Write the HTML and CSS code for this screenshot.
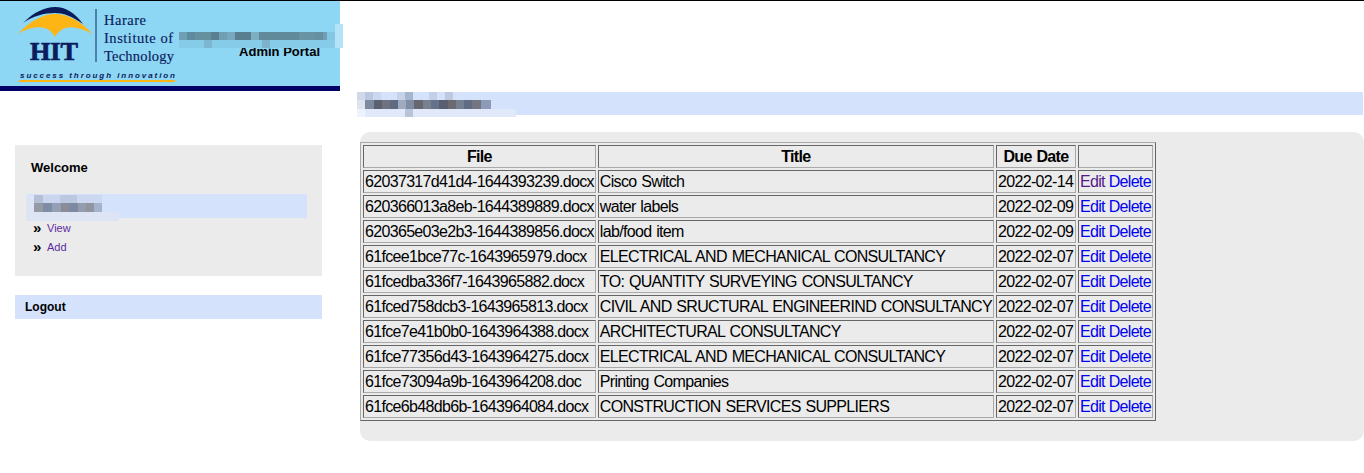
FILE: index.html
```html
<!DOCTYPE html>
<html lang="en">
<head>
<meta charset="utf-8">
<title>Admin Portal</title>
<link rel="stylesheet" href="styles.css">
</head>
<body>
<div class="page">
  <div class="left">
    <header class="banner">
      <svg class="logo" viewBox="0 0 180 85" width="180" height="85" aria-label="Harare Institute of Technology">
        <path d="M23 22 C34 11 45 6 55 6 C66 6 75 12 83 23 C72 15 63 12 55 12 C44 12 33 15 23 22 Z" fill="#0b1c5c"/>
        <path d="M17.5 33 C30 20 43 13 55 13 C68 13 81 20 92.5 33 C82 27 71 25 65 27 C60 29 57 32 55 36 C53 32 50 29 45 27 C38 25 27 27 17.5 33 Z" fill="#fdb515"/>
        <text class="logo-hit" x="30" y="58.5" textLength="48" lengthAdjust="spacingAndGlyphs">HIT</text>
        <rect x="95.5" y="8" width="1" height="53" fill="#0b2a6b"/>
        <text class="logo-name" x="104" y="23.5" textLength="42">Harare</text>
        <text class="logo-name" x="104" y="42" textLength="69">Institute of</text>
        <text class="logo-name" x="104" y="59.5" textLength="70">Technology</text>
        <text class="logo-tag" x="20" y="77" textLength="155">success through innovation</text>
        <rect x="19" y="79" width="156" height="2" fill="#fdb515"/>
      </svg>
      <div class="portal">Admin Portal</div>
      <svg class="mosaic mosaic-banner" width="165" height="24" viewBox="0 0 165 24" aria-hidden="true" shape-rendering="crispEdges">
        <rect x="0" y="8" width="149" height="8" fill="#6f9fb2"/>
        <rect x="8" y="8" width="8" height="8" fill="#5d8a9c"/>
        <rect x="16" y="8" width="24" height="8" fill="#65919f"/>
        <rect x="32" y="8" width="8" height="8" fill="#578090"/>
        <rect x="48" y="8" width="8" height="8" fill="#78a8bd"/>
        <rect x="56" y="8" width="16" height="8" fill="#577f90"/>
        <rect x="72" y="8" width="8" height="8" fill="#7dafc2"/>
        <rect x="80" y="8" width="40" height="8" fill="#60899a"/>
        <rect x="120" y="8" width="16" height="8" fill="#6793a4"/>
        <rect x="136" y="8" width="8" height="8" fill="#64909f"/>
        <rect x="148" y="8" width="9" height="8" fill="#83c6e6"/>
        <rect x="0" y="16" width="157" height="8" fill="#86cce8"/>
        <rect x="25" y="16" width="8" height="8" fill="#7cb6d0"/>
        <rect x="83" y="16" width="8" height="8" fill="#7cb3ca"/>
        <rect x="156" y="0" width="8" height="24" fill="#b5e3f6"/>
      </svg>
    </header>
    <aside class="side">
      <section class="welcome">
        <h3 class="welcome-title">Welcome</h3>
        <div class="section-bar">
          <svg class="mosaic mosaic-side" width="94" height="27" viewBox="0 0 94 27" aria-hidden="true" shape-rendering="crispEdges">
            <rect x="0" y="18" width="93" height="9" fill="#dde5f5"/>
            <rect x="0" y="1" width="8" height="17" fill="#dde4f3"/>
            <rect x="8" y="1" width="9" height="8" fill="#b5c0d8"/>
            <rect x="17" y="1" width="17" height="8" fill="#cbd6ee"/>
            <rect x="34" y="1" width="17" height="8" fill="#bcc8e0"/>
            <rect x="51" y="1" width="25" height="8" fill="#ccd8f0"/>
            <rect x="8" y="9" width="9" height="9" fill="#9699a6"/>
            <rect x="17" y="9" width="9" height="9" fill="#7f8ca3"/>
            <rect x="26" y="9" width="9" height="9" fill="#95a0b6"/>
            <rect x="35" y="9" width="8" height="9" fill="#8a8c96"/>
            <rect x="43" y="9" width="9" height="9" fill="#7d899f"/>
            <rect x="52" y="9" width="8" height="9" fill="#959cb0"/>
            <rect x="60" y="9" width="8" height="9" fill="#91949f"/>
            <rect x="68" y="9" width="8" height="9" fill="#a4b2cb"/>
          </svg>
        </div>
        <ul class="menu">
          <li class="menu-item"><span class="raquo">»</span><a class="menu-link" href="#view">View</a></li>
          <li class="menu-item"><span class="raquo">»</span><a class="menu-link" href="#add">Add</a></li>
        </ul>
      </section>
      <div class="logout">Logout</div>
    </aside>
  </div>
  <main class="main">
    <div class="title-bar">
      <svg class="mosaic mosaic-title" width="160" height="25" viewBox="0 0 160 25" aria-hidden="true" shape-rendering="crispEdges">
        <rect x="0" y="17" width="159" height="8" fill="#e0e8fa"/>
        <rect x="0" y="17" width="8" height="8" fill="#ecf2fe"/>
        <rect x="48" y="17" width="8" height="8" fill="#b9c3d9"/>
        <rect x="0" y="0" width="8" height="8" fill="#d0d8ea"/>
        <rect x="8" y="0" width="8" height="8" fill="#b9c7df"/>
        <rect x="16" y="0" width="8" height="8" fill="#cbd7ef"/>
        <rect x="40" y="0" width="8" height="8" fill="#c7d1e8"/>
        <rect x="48" y="0" width="8" height="8" fill="#a5b4cf"/>
        <rect x="72" y="0" width="8" height="8" fill="#c3d0e9"/>
        <rect x="88" y="0" width="8" height="8" fill="#c0c8e0"/>
        <rect x="0" y="8" width="8" height="9" fill="#dfe3ee"/>
        <rect x="8" y="8" width="9" height="9" fill="#7d8a9f"/>
        <rect x="17" y="8" width="8" height="9" fill="#5c6170"/>
        <rect x="25" y="8" width="8" height="9" fill="#6f7280"/>
        <rect x="33" y="8" width="8" height="9" fill="#5f6b80"/>
        <rect x="41" y="8" width="8" height="9" fill="#a0aabf"/>
        <rect x="49" y="8" width="8" height="9" fill="#7f8ca3"/>
        <rect x="57" y="8" width="9" height="9" fill="#65686f"/>
        <rect x="66" y="8" width="8" height="9" fill="#79818f"/>
        <rect x="74" y="8" width="8" height="9" fill="#64738b"/>
        <rect x="82" y="8" width="9" height="9" fill="#595f6f"/>
        <rect x="91" y="8" width="8" height="9" fill="#6a6a70"/>
        <rect x="99" y="8" width="8" height="9" fill="#75808f"/>
        <rect x="107" y="8" width="8" height="9" fill="#5f6c83"/>
        <rect x="115" y="8" width="9" height="9" fill="#73757f"/>
        <rect x="124" y="8" width="10" height="9" fill="#8d9bb9"/>
      </svg>
    </div>
    <div class="panel">
      <table class="files">
        <thead>
          <tr><th class="cell">File</th><th class="cell">Title</th><th class="cell">Due Date</th><th class="cell"></th></tr>
        </thead>
        <tbody>
          <tr><td class="cell">62037317d41d4-1644393239.docx</td><td class="cell">Cisco Switch</td><td class="cell">2022-02-14</td><td class="cell"><a class="visited" href="#e">Edit</a> <a href="#d">Delete</a></td></tr>
          <tr><td class="cell">620366013a8eb-1644389889.docx</td><td class="cell">water labels</td><td class="cell">2022-02-09</td><td class="cell"><a href="#e">Edit</a> <a href="#d">Delete</a></td></tr>
          <tr><td class="cell">620365e03e2b3-1644389856.docx</td><td class="cell">lab/food item</td><td class="cell">2022-02-09</td><td class="cell"><a href="#e">Edit</a> <a href="#d">Delete</a></td></tr>
          <tr><td class="cell">61fcee1bce77c-1643965979.docx</td><td class="cell">ELECTRICAL AND MECHANICAL CONSULTANCY</td><td class="cell">2022-02-07</td><td class="cell"><a href="#e">Edit</a> <a href="#d">Delete</a></td></tr>
          <tr><td class="cell">61fcedba336f7-1643965882.docx</td><td class="cell">TO: QUANTITY SURVEYING CONSULTANCY</td><td class="cell">2022-02-07</td><td class="cell"><a href="#e">Edit</a> <a href="#d">Delete</a></td></tr>
          <tr><td class="cell">61fced758dcb3-1643965813.docx</td><td class="cell">CIVIL AND SRUCTURAL ENGINEERIND CONSULTANCY</td><td class="cell">2022-02-07</td><td class="cell"><a href="#e">Edit</a> <a href="#d">Delete</a></td></tr>
          <tr><td class="cell">61fce7e41b0b0-1643964388.docx</td><td class="cell">ARCHITECTURAL CONSULTANCY</td><td class="cell">2022-02-07</td><td class="cell"><a href="#e">Edit</a> <a href="#d">Delete</a></td></tr>
          <tr><td class="cell">61fce77356d43-1643964275.docx</td><td class="cell">ELECTRICAL AND MECHANICAL CONSULTANCY</td><td class="cell">2022-02-07</td><td class="cell"><a href="#e">Edit</a> <a href="#d">Delete</a></td></tr>
          <tr><td class="cell">61fce73094a9b-1643964208.doc</td><td class="cell">Printing Companies</td><td class="cell">2022-02-07</td><td class="cell"><a href="#e">Edit</a> <a href="#d">Delete</a></td></tr>
          <tr><td class="cell">61fce6b48db6b-1643964084.docx</td><td class="cell">CONSTRUCTION SERVICES SUPPLIERS</td><td class="cell">2022-02-07</td><td class="cell"><a href="#e">Edit</a> <a href="#d">Delete</a></td></tr>
        </tbody>
      </table>
    </div>
  </main>
</div>
</body>
</html>
```
FILE: styles.css
```css
* { box-sizing: border-box; }
html, body { margin: 0; padding: 0; background: #fff; }
body {
  font-family: "Liberation Sans", Arial, sans-serif;
  color: #000;
  border-top: 1px solid #000;
  height: 473px;
  overflow: hidden;
}
.page { display: flex; align-items: flex-start; }
.left { width: 340px; flex: none; }
.banner {
  position: relative;
  height: 90px;
  background: #8dd6f4;
  border-bottom: 5px solid #000066;
  display: flex;
  align-items: flex-start;
  justify-content: space-between;
}
.logo { display: block; flex: none; }
.logo-hit { font: bold 26px "Liberation Serif", serif; fill: #0b1c5c; stroke: #0b1c5c; stroke-width: 0.7; }
.logo-name { font: 14.5px "Liberation Serif", serif; fill: #0b1c5c; stroke: #0b1c5c; stroke-width: 0.15; }
.logo-tag { font: italic bold 8px "Liberation Sans", sans-serif; fill: #0b1c5c; }
.portal {
  font-size: 13px;
  font-weight: bold;
  line-height: 15px;
  margin: 43px 20px 0 0;
  color: #000;
}
.mosaic { position: absolute; display: block; }
.mosaic-banner { left: 179px; top: 23px; }
.side { padding: 54px 18px 0 15px; }
.welcome { background: #ebebeb; height: 131px; padding: 15px 15px 0 12px; }
.welcome-title { margin: 0 0 0 4px; font-size: 13px; line-height: 16px; font-weight: bold; }
.section-bar { position: relative; height: 24px; margin-top: 18px; background: #d4e2fc; }
.mosaic-side { left: -1px; top: 0; }
.menu { list-style: none; margin: 0; padding: 0 0 0 6px; }
.menu-item { display: flex; align-items: center; height: 19px; font-size: 11px; }
.raquo { width: 14px; font-size: 15px; font-weight: bold; line-height: 19px; }
.menu-link { color: #5b2aa0; text-decoration: none; }
.logout {
  margin-top: 19px;
  height: 24px;
  padding-left: 10px;
  background: #d4e2fc;
  font-size: 12px;
  font-weight: bold;
  line-height: 24px;
}
.main { flex: 1; min-width: 0; padding-top: 91px; }
.title-bar { position: relative; height: 23px; margin: 0 1px 0 17px; background: #d4e2fc; }
.mosaic-title { left: 0; top: 0; }
.panel {
  margin: 17px 0 0 20px;
  padding: 10px 0 20px 0;
  background: #ebebeb;
  border-radius: 10px;
}
.files {
  border: 1px solid;
  border-color: #a9a9a9 #666 #666 #a9a9a9;
  border-collapse: separate;
  border-spacing: 2px;
  font-size: 16px;
  letter-spacing: -0.67px;
  word-spacing: 1px;
}
.cell {
  border: 1px solid;
  border-color: #666 #a9a9a9 #a9a9a9 #666;
  padding: 1px;
  height: 23px;
  line-height: 19px;
  white-space: nowrap;
}
th.cell:nth-child(3) { min-width: 80px; }
td.cell { text-align: left; }
td.cell:last-child { word-spacing: 0; }
a { color: #0000ee; text-decoration: none; }
a.visited { color: #551a8b; }
```
